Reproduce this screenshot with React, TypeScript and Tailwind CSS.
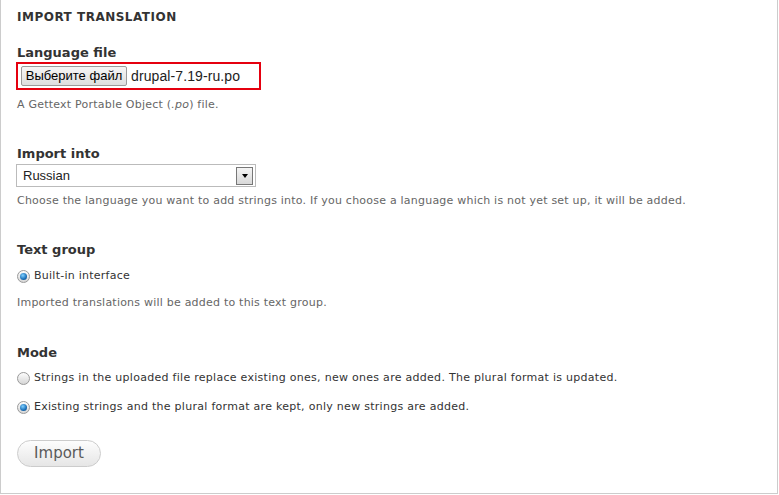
import React from "react"

const body = "font-['DejaVu_Sans',Verdana,sans-serif]"
const arial = "font-['Liberation_Sans',Arial,sans-serif]"

const Radio = ({ checked }: { checked?: boolean }) => (
  <span className="flex h-[13px] w-[13px] shrink-0 items-center justify-center rounded-full border border-[#9a9a9a] bg-gradient-to-b from-[#fdfdfd] to-[#d6d6d6]">
    {checked && (
      <span className="h-[7px] w-[7px] rounded-full bg-[radial-gradient(circle_at_40%_35%,#7fd0ff,#1a6fb8_60%,#0b3f73)]" />
    )}
  </span>
)

const Label = ({ children }: { children: React.ReactNode }) => (
  <div className="text-[13px] font-bold leading-[16px] text-[#333]">{children}</div>
)

const Desc = ({ children }: { children: React.ReactNode }) => (
  <div className="text-[11px] leading-[14px] tracking-[0.22px] text-[#666]">{children}</div>
)

export default function App() {
  return (
    <div className={`h-[495px] w-[779px] bg-white ${body}`}>
      <div className="h-[494px] w-[778px] border-x border-b border-[#ccc] px-4 pt-[10px]">
        <div className="text-[12px] font-bold uppercase leading-[14px] tracking-[0.5px] text-[#333]">
          Import translation
        </div>

        <div className="mt-[21px]">
          <Label>Language file</Label>
          <div className="mt-[1px] -ml-[1px] flex h-[28px] w-[245px] items-center border-2 border-[#e5000f] pl-[3px]">
            <span className={`flex h-[20px] w-[106px] items-center justify-center rounded-[2px] border border-[#9b9b9b] bg-gradient-to-b from-[#f6f6f6] to-[#dedede] text-[13px] text-black ${arial}`}>
              Выберите файл
            </span>
            <span className={`ml-[4px] text-[14px] tracking-[0.1px] text-[#222] ${arial}`}>drupal-7.19-ru.po</span>
          </div>
          <div className="mt-[8px]">
            <Desc>
              A Gettext Portable Object (<em>.po</em>) file.
            </Desc>
          </div>
        </div>

        <div className="mt-[34px]">
          <Label>Import into</Label>
          <div className="mt-[2px] -ml-[1px] flex h-[23px] w-[240px] items-center justify-between border border-[#bbb] bg-white pl-[6px] pr-[2px]">
            <span className={`text-[13px] text-[#222] ${arial}`}>Russian</span>
            <span className="flex h-[18px] w-[17px] items-center justify-center border border-[#777] bg-gradient-to-b from-[#f4f4f4] to-[#d8d8d8]">
              <span className="h-0 w-0 border-x-[3.5px] border-t-[4px] border-x-transparent border-t-black" />
            </span>
          </div>
          <div className="mt-[7px]">
            <Desc>
              Choose the language you want to add strings into. If you choose a language which is not yet set up, it will be added.
            </Desc>
          </div>
        </div>

        <div className="mt-[34px]">
          <Label>Text group</Label>
          <div className="mt-[11px] flex items-center gap-[4px] text-[11px] leading-[14px] tracking-[0.25px] text-[#333]">
            <Radio checked />
            <span>Built-in interface</span>
          </div>
          <div className="mt-[13px]">
            <Desc>Imported translations will be added to this text group.</Desc>
          </div>
        </div>

        <div className="mt-[35px]">
          <Label>Mode</Label>
          <div className="mt-[10px] flex items-center gap-[4px] text-[11px] leading-[14px] tracking-[0.28px] text-[#333]">
            <Radio />
            <span>Strings in the uploaded file replace existing ones, new ones are added. The plural format is updated.</span>
          </div>
          <div className="mt-[15px] flex items-center gap-[4px] text-[11px] leading-[14px] tracking-[0.28px] text-[#333]">
            <Radio checked />
            <span>Existing strings and the plural format are kept, only new strings are added.</span>
          </div>
        </div>

        <button className="mt-[26px] flex h-[27px] w-[84px] items-center justify-center rounded-full border border-[#ccc] bg-gradient-to-b from-[#fdfdfd] to-[#e6e6e6] text-[15px] text-[#5a5a5a]">
          Import
        </button>
      </div>
    </div>
  )
}
